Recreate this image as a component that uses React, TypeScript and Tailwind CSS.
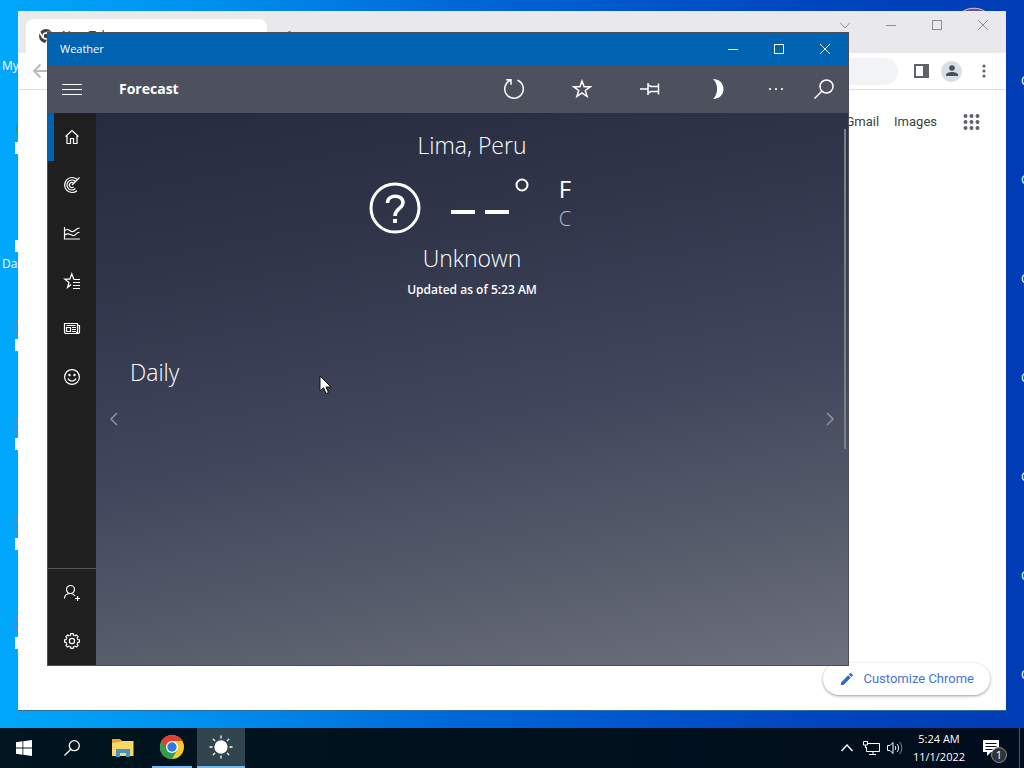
import { useState, type ReactNode } from "react";

const DesktopLabel = ({ children }: { children: ReactNode }) => (
  <span className="text-xs leading-4 text-white whitespace-nowrap">{children}</span>
);

const WindowButtons = () => (
  <div className="flex h-full">
    <button type="button" title="Minimize" className="w-[46px] h-full grid place-items-center">
      <svg width="10" height="10" viewBox="0 0 10 10" shapeRendering="crispEdges" stroke="currentColor">
        <path d="M0 5.5h10" />
      </svg>
    </button>
    <button type="button" title="Maximize" className="w-[46px] h-full grid place-items-center">
      <svg width="10" height="10" viewBox="0 0 10 10" shapeRendering="crispEdges" fill="none" stroke="currentColor">
        <path d="M.5.5h9v9h-9z" />
      </svg>
    </button>
    <button type="button" title="Close" className="w-[46px] h-full grid place-items-center">
      <svg width="10" height="10" viewBox="0 0 10 10" stroke="currentColor">
        <path d="M0 0l10 10M10 0L0 10" />
      </svg>
    </button>
  </div>
);

const ChromeWindow = () => (
  <section className="absolute inset-x-[18px] top-[11px] bottom-[17px] bg-white flex flex-col border-b border-[#2f6f9f] font-[Roboto,sans-serif]">
    <header className="h-[42px] bg-[#e9e9ec] flex justify-between shrink-0">
      <div className="flex pt-2 pl-2">
        <div className="w-[241px] h-[34px] bg-white rounded-t-lg flex items-center gap-2 pl-3 text-xs text-gray-700">
          <svg width="16" height="16" viewBox="0 0 16 16" fill="none">
            <circle cx="8" cy="8" r="7" fill="#3c4043" />
            <path d="M8 4.500h7M5 10L1.500 4M11 10l-3.500 6" stroke="#fff" strokeWidth="1.500" />
            <circle cx="8" cy="8" r="3" fill="#3c4043" stroke="#fff" strokeWidth="1.500" />
          </svg>
          <span>New Tab</span>
        </div>
        <button type="button" title="New tab" className="ml-2 h-[34px] w-7 grid place-items-center text-gray-500">
          <svg width="11" height="11" viewBox="0 0 11 11" stroke="currentColor" strokeWidth="2">
            <path d="M5.500 0v11M0 5.500h11" />
          </svg>
        </button>
      </div>
      <div className="h-7 flex text-[#8d8e91]">
        <button type="button" title="Search tabs" className="w-[46px] grid place-items-center">
          <svg width="10" height="7" viewBox="0 0 10 7" fill="none" stroke="currentColor">
            <path d="M0 .5l5 5.500 5-5.500" />
          </svg>
        </button>
        <WindowButtons />
      </div>
    </header>

    <div className="h-[37px] shrink-0 border-b border-[#dcdddf] flex items-center gap-3 pl-[14px] pr-3">
      <button type="button" title="Back" className="text-[#b8babd]">
        <svg width="16" height="16" viewBox="0 0 16 16" fill="none" stroke="currentColor" strokeWidth="2">
          <path d="M16 8H2M8.500 1.500L2 8l6.500 6.500" />
        </svg>
      </button>
      <input aria-label="Address" className="flex-1 h-[27px] rounded-full bg-[#f1f3f4] px-4 text-sm" />
      <button type="button" title="Side panel" className="ml-1 text-[#5f6368]">
        <svg width="15" height="14" viewBox="0 0 15 14">
          <path fill="currentColor" fillRule="evenodd" d="M0 0h15v14H0zM2 2v10h7V2z" />
        </svg>
      </button>
      <button type="button" title="Profile" className="w-[21px] h-[21px] rounded-full bg-[#dadfe5] grid place-items-center text-[#46535f]">
        <svg width="12" height="12" viewBox="0 0 12 12" fill="currentColor">
          <circle cx="6" cy="3" r="2.800" />
          <path d="M0 11V10c0-2 3-3 6-3s6 1 6 3v1z" />
        </svg>
      </button>
      <button type="button" title="Menu" className="w-5 grid place-items-center text-[#5f6368]">
        <svg width="4" height="14" viewBox="0 0 4 14" fill="currentColor">
          <circle cx="2" cy="2" r="1.600" />
          <circle cx="2" cy="7" r="1.600" />
          <circle cx="2" cy="12" r="1.600" />
        </svg>
      </button>
    </div>

    <nav className="flex items-center justify-end pt-6 pr-[26px] text-[13px] leading-4 text-[#3c3f43]">
      <a href="#gmail">Gmail</a>
      <a href="#images" className="ml-[15px]">Images</a>
      <button type="button" title="Google apps" className="ml-[26px]">
        <svg width="17" height="16" viewBox="0 0 17 16" fill="#5f6368">
          {[2, 8, 14].map((y) =>
            [2.5, 8.5, 14.5].map((x) => <circle key={`${x}-${y}`} cx={x} cy={y} r="2" />)
          )}
        </svg>
      </button>
    </nav>

    <button
      type="button"
      className="mt-auto mb-[15px] mr-4 self-end h-8 pl-[18px] pr-4 rounded-full bg-white flex items-center gap-[10px] text-[13px] text-[#4a72cf] shadow-[0_1px_3px_rgba(0,0,0,0.4)]"
    >
      <svg width="12" height="12" viewBox="0 0 12 12" fill="#2e6ad0">
        <path d="M0 9.500V12h2.500L9.700 4.800 7.200 2.300zM10.400 4.100l1.300-1.300a.8.8 0 000-1L10.200.3a.8.8 0 00-1 0L7.900 1.600z" />
      </svg>
      Customize Chrome
    </button>
  </section>
);

const navIcons: { name: string; icon: ReactNode }[] = [
  { name: "Forecast", icon: <path d="M1.500 7.500L8 1.500l6.500 6M3 6.500v8h3.500v-5h3v5H13v-8" /> },
  {
    name: "Maps",
    icon: (
      <>
        <path d="M13 2.300A7.500 7.500 0 1013 13.700M11.300 4.300a5 5 0 10.200 7.200M9.500 5.900a2.600 2.600 0 10.200 4" />
        <path d="M8 8l7.500-7.500" />
      </>
    ),
  },
  { name: "Historical weather", icon: <path d="M.5 2v12H16M.5 6C3 3 5 5 7.500 6.500S11 3.500 15.500 3M1 10c3-3 5 0 8 .5S12 7 15.500 7.500" /> },
  {
    name: "Favorites",
    icon: <path d="M7 11.500L3.500 14.500l1.500-5L.8 6.200h5L7.800.8l2 5.400M9.500 6.500H16M9 9.500h7M9 12.500h7M9 15.500h7" />,
  },
  {
    name: "News",
    icon: (
      <>
        <path d="M.5 2.500h13v10H2a1.500 1.500 0 01-1.500-1.500zM13.500 4.500h2V11a1.500 1.500 0 01-3 0M2.500 4.500h9" />
        <path d="M2.500 6.500h4v4h-4zM8 6.500h4M8 8.500h4M8 10.500h4" />
      </>
    ),
  },
  {
    name: "Send feedback",
    icon: (
      <>
        <circle cx="8" cy="8" r="7.400" />
        <path d="M4 9.500c1.500 3.300 6.500 3.300 8 0" />
        <circle cx="5.500" cy="6" r=".6" fill="currentColor" />
        <circle cx="10.500" cy="6" r=".6" fill="currentColor" />
      </>
    ),
  },
];

const gearAngles = [0, 45, 90, 135, 180, 225, 270, 315];

const bottomIcons: { name: string; icon: ReactNode }[] = [
  {
    name: "Sign in",
    icon: (
      <>
        <circle cx="6.500" cy="4.500" r="4" />
        <path d="M.5 13.500c0-3.500 2.500-5 6-5 2 0 3.500.8 4.500 2.500M13.500 11v5M11 13.500h5" />
      </>
    ),
  },
  {
    name: "Settings",
    icon: (
      <>
        {gearAngles.map((a) => (
          <path key={a} transform={`rotate(${a} 8 8)`} d="M5.700 2.400L6.500 2.200 6.800.6h2.400l.3 1.600.8.200" />
        ))}
        <circle cx="8" cy="8" r="2.600" />
      </>
    ),
  },
];

const NavIcon = ({ children }: { children: ReactNode }) => (
  <svg width="16" height="16" viewBox="0 0 16 16" fill="none" stroke="currentColor" strokeWidth="1.200" className="overflow-visible">
    {children}
  </svg>
);

const WeatherWindow = () => {
  const [page, setPage] = useState("Forecast");
  const [unit, setUnit] = useState("F");

  return (
    <section className="absolute left-[47px] right-[175px] top-8 bottom-[62px] border border-[#4a4d55] flex flex-col text-white">
      <header className="h-8 shrink-0 bg-[#0063b1] flex items-center justify-between">
        <h1 className="pl-3 text-[11px] leading-4">Weather</h1>
        <WindowButtons />
      </header>

      <div className="h-12 shrink-0 bg-[#4d505d] flex items-center">
        <button type="button" title="Expand menu" className="w-12 h-full grid place-items-center">
          <svg width="20" height="11" viewBox="0 0 20 11" stroke="currentColor" shapeRendering="crispEdges">
            <path d="M0 .5h20M0 5.500h20M0 10.500h20" />
          </svg>
        </button>
        <h2 className="ml-[23px] text-sm font-bold">Forecast</h2>
        <div className="ml-auto flex h-full items-center">
          <button type="button" title="Refresh" className="w-[68px] h-full grid place-items-center">
            <svg width="22" height="22" viewBox="0 0 22 22" fill="none" stroke="currentColor" strokeWidth="1.500">
              <path d="M7.500 2.300A9.300 9.300 0 1014.500 2.300M3 1.700h5v5" />
            </svg>
          </button>
          <button type="button" title="Add to favorites" className="w-[68px] h-full grid place-items-center">
            <svg width="20" height="20" viewBox="0 0 20 20" fill="none" stroke="currentColor" strokeWidth="1.500">
              <path d="M10 2l2.100 5.800h6.100l-4.900 3.700 1.800 6-5.100-3.600-5.100 3.600 1.800-6L1.800 7.800h6.100z" />
            </svg>
          </button>
          <button type="button" title="Pin" className="w-[68px] h-full grid place-items-center">
            <svg width="20" height="14" viewBox="0 0 20 14" fill="none" stroke="currentColor" strokeWidth="1.500">
              <path d="M0 7h8M8 1v12M8 3l3 1.500h7.500M8 11l3-1.500h7.500M18.500 1.500v11" />
            </svg>
          </button>
          <button type="button" title="Dark theme" className="w-[68px] h-full grid place-items-center">
            <svg width="12" height="20" viewBox="0 0 12 20" fill="currentColor">
              <path d="M1 0c6 0 10.500 4 10.500 10S7 20 1 20c5.500-5 5.500-15 0-20z" />
            </svg>
          </button>
          <button type="button" title="See more" className="w-12 h-full grid place-items-center">
            <svg width="16" height="4" viewBox="0 0 16 4" fill="currentColor">
              <circle cx="2" cy="2" r="1.100" />
              <circle cx="8" cy="2" r="1.100" />
              <circle cx="14" cy="2" r="1.100" />
            </svg>
          </button>
          <button type="button" title="Search" className="w-12 h-full grid place-items-center">
            <svg width="20" height="20" viewBox="0 0 20 20" fill="none" stroke="currentColor" strokeWidth="1.500">
              <circle cx="12.500" cy="7.500" r="6.500" />
              <path d="M8 12L.5 19.500" />
            </svg>
          </button>
        </div>
      </div>

      <div className="flex-1 flex min-h-0">
        <nav className="w-12 shrink-0 bg-[#1f1f1f] flex flex-col">
          {navIcons.map(({ name, icon }) => (
            <button
              key={name}
              type="button"
              title={name}
              onClick={() => setPage(name)}
              className={`h-12 pr-[6px] border-l-[6px] grid place-items-center ${
                page === name ? "border-[#0063b1]" : "border-transparent"
              }`}
            >
              <NavIcon>{icon}</NavIcon>
            </button>
          ))}
          <div className="mt-auto border-t border-[#55565a] flex flex-col">
            {bottomIcons.map(({ name, icon }) => (
              <button key={name} type="button" title={name} className="h-12 grid place-items-center">
                <NavIcon>{icon}</NavIcon>
              </button>
            ))}
          </div>
        </nav>

        <main className="relative flex-1 bg-[linear-gradient(170deg,#272b40_0%,#30354a_25%,#41465c_55%,#585d6c_80%,#6d717d_100%)]">
          <div className="flex flex-col items-center pt-4">
            <p className="text-[23px] leading-8 font-light">Lima, Peru</p>
            <div className="flex items-start mt-[13px] pr-1 h-[60px]">
              <svg width="52" height="52" viewBox="0 0 52 52" fill="none" stroke="currentColor" strokeWidth="3" className="mt-2">
                <circle cx="26" cy="26" r="24" />
                <path d="M18.500 21c0-9 15.500-9 15.500-.5 0 6-8 6-8 13.500" strokeWidth="3.500" />
                <path d="M26 37v4" strokeWidth="4" />
              </svg>
              <svg width="80" height="48" viewBox="0 0 80 48" fill="none" stroke="currentColor" className="ml-[30px]" role="img" aria-label="Temperature unavailable">
                <path d="M0 38h24M34 38h24" strokeWidth="4" />
                <circle cx="71" cy="11" r="5.500" strokeWidth="2" />
              </svg>
              <div className="ml-7 flex flex-col">
                {["F", "C"].map((u) => (
                  <button
                    key={u}
                    type="button"
                    onClick={() => setUnit(u)}
                    className={`h-[30px] leading-7 text-left ${unit === u ? "text-2xl" : "text-xl font-light text-[#b9bbc6]"}`}
                  >
                    {u}
                  </button>
                ))}
              </div>
            </div>
            <p className="mt-2 text-[23px] leading-8 font-light">Unknown</p>
            <p className="mt-2 text-xs leading-4 font-semibold">Updated as of 5:23 AM</p>
          </div>
          <h3 className="mt-[58px] ml-[34px] text-[23px] leading-8 font-light">Daily</h3>
          <div className="mt-6 px-[13px] flex justify-between text-[#8d90a0]">
            <button type="button" title="Previous">
              <svg width="9" height="14" viewBox="0 0 9 14" fill="none" stroke="currentColor" strokeWidth="1.500">
                <path d="M8 1L2 7l6 6" />
              </svg>
            </button>
            <button type="button" title="Next">
              <svg width="9" height="14" viewBox="0 0 9 14" fill="none" stroke="currentColor" strokeWidth="1.500">
                <path d="M1 1l6 6-6 6" />
              </svg>
            </button>
          </div>
          <div className="absolute right-[2px] top-4 w-[2px] h-[320px] bg-[#7d7f88]" />
        </main>
      </div>
    </section>
  );
};

const Taskbar = () => (
  <footer className="h-10 shrink-0 bg-[linear-gradient(90deg,#00151f,#010d1c)] flex items-stretch text-white">
    <button type="button" title="Start" className="w-12 grid place-items-center">
      <svg width="16" height="16" viewBox="0 0 16 16" fill="currentColor">
        <path d="M0 2.200l6.500-.9v6.200H0zM7.300 1.200L16 0v7.500H7.300zM0 8.400h6.500v6.300L0 13.800zM7.300 8.400H16V16l-8.700-1.200z" />
      </svg>
    </button>
    <button type="button" title="Search" className="w-12 grid place-items-center">
      <svg width="16" height="16" viewBox="0 0 16 16" fill="none" stroke="currentColor" strokeWidth="1.300">
        <circle cx="10.300" cy="5.700" r="5" />
        <path d="M6.800 9.300L.5 15.500" />
      </svg>
    </button>
    <button type="button" title="File Explorer" className="ml-[3px] w-12 grid place-items-center">
      <svg width="22" height="18" viewBox="0 0 22 18">
        <path d="M0 0h8l2 2h11v15H0z" fill="#e3a72f" />
        <path d="M0 4l8-1 1-1h12.500v15H0z" fill="#fbd865" />
        <path d="M4 10h14v8h-4v-4H8v4H4z" fill="#4595c8" />
      </svg>
    </button>
    <button type="button" title="Google Chrome" className="ml-[5px] w-10 grid place-items-center border-b-2 border-[#76b9ed]">
      <svg width="24" height="24" viewBox="0 0 24 24">
        <circle cx="12" cy="12" r="12" fill="#fbc928" />
        <path d="M12 12L1.600 6A12 12 0 0012 24l5.200-9z" fill="#2f9e52" />
        <path d="M12 12L6.800 15 1.600 6a12 12 0 0120.800 0H12z" fill="#df4232" />
        <circle cx="12" cy="12" r="6" fill="#fff" />
        <circle cx="12" cy="12" r="4.700" fill="#317be0" />
      </svg>
    </button>
    <button type="button" title="Weather" className="ml-[5px] w-12 grid place-items-center bg-[#32454f] border-b-2 border-[#76b9ed]">
      <svg width="24" height="24" viewBox="0 0 24 24" stroke="currentColor" strokeWidth="1.300">
        <circle cx="12" cy="12" r="6" fill="currentColor" />
        <path d="M12 .5v3M12 20.500v3M.5 12h3M20.500 12h3M3.900 3.900L6 6M18 18l2.100 2.100M3.900 20.100L6 18M18 6l2.100-2.100" />
      </svg>
    </button>

    <div className="ml-auto flex items-center">
      <button type="button" title="Show hidden icons" className="w-6 h-full grid place-items-center">
        <svg width="12" height="8" viewBox="0 0 12 8" fill="none" stroke="currentColor" strokeWidth="1.400">
          <path d="M.5 7L6 1l5.500 6" />
        </svg>
      </button>
      <button type="button" title="Network" className="w-6 h-full grid place-items-center">
        <svg width="17" height="15" viewBox="0 0 17 15" fill="none" stroke="currentColor">
          <path d="M5 2.500h11.500v8H3.500V6M10 10.500v3M6 13.500h7M.5.5h4v3.500h-4zM2.500 4v3" />
        </svg>
      </button>
      <button type="button" title="Volume" className="w-6 h-full grid place-items-center">
        <svg width="16" height="14" viewBox="0 0 16 14" fill="none" stroke="currentColor">
          <path d="M.5 4.500h2.500l3-3v11l-3-3H.5zM8 5c1 1 1 3 0 4M10 3c2 2 2 6 0 8" />
          <path d="M12.500 1c3 3 3 9 0 12" opacity=".5" />
        </svg>
      </button>
      <button type="button" className="w-16 text-[11px] leading-[18px] text-center">
        <span className="block">5:24 AM</span>
        <span className="block">11/1/2022</span>
      </button>
      <button type="button" title="Notifications" className="relative w-12 h-full pr-2 grid place-items-center">
        <svg width="16" height="16" viewBox="0 0 16 16">
          <path d="M0 0h16v12H8l-4 4v-4H0z" fill="currentColor" />
          <path d="M2.500 3.500h11M2.500 6.500h11M2.500 9.500h7" stroke="#010d1c" />
        </svg>
        <span className="absolute left-5 top-[19px] w-4 h-4 rounded-full bg-[#30343a] border border-[#8a8d91] text-[11px] leading-[14px] text-center">1</span>
      </button>
      <div className="w-[5px] h-full border-l border-[#4f5661]" />
    </div>
  </footer>
);

export default function App() {
  return (
    <div className="h-screen min-h-[500px] flex flex-col overflow-hidden font-['Open_Sans',sans-serif] select-none">
      <div className="relative flex-1 overflow-hidden bg-[linear-gradient(90deg,#00a8fb_0%,#0090ef_20%,#0067d9_45%,#0045c0_80%,#003cb4_100%)]">
        {/* desktop shortcuts, mostly hidden behind the windows */}
        <div className="absolute left-[2px] top-[58px] flex flex-col gap-[182px]">
          <DesktopLabel>My</DesktopLabel>
          <DesktopLabel>Da</DesktopLabel>
        </div>
        <svg width="6" height="600" viewBox="0 0 6 600" fill="none" className="absolute left-[14px] top-[100px]">
          <path d="M5 22c-4 4-4 12 0 16" fill="#1ba35b" />
          {[42, 140, 239, 338, 438, 537].map((y) => (
            <path key={y} d={`M1 ${y}h3v12h-3z`} fill="#fff" />
          ))}
          {[217, 316, 415, 514].map((y) => (
            <path key={y} d={`M5 ${y}c-5 6-5 14 0 20`} stroke="#6d7fb8" strokeWidth="1.500" />
          ))}
        </svg>
        <svg width="28" height="14" viewBox="0 0 28 14" fill="none" className="absolute right-9 top-[6px]">
          <path d="M2 6C8 1 20 1 26 6" fill="#7a4a78" stroke="#c9cfe6" />
        </svg>
        <div className="absolute left-[1021px] top-[73px] flex flex-col gap-[83px]">
          {["C", "C", "C", "C", "C", "C", "C"].map((label, i) => (
            <DesktopLabel key={i}>{label}</DesktopLabel>
          ))}
        </div>
        <ChromeWindow />
        <WeatherWindow />
        <svg width="13" height="20" viewBox="0 0 13 20" className="absolute left-[319px] top-[375px]">
          <path d="M1 1v15l3.500-3.300L7 18.500l2.500-1L7 12h5z" fill="#fff" stroke="#111" />
        </svg>
      </div>
      <Taskbar />
    </div>
  );
}
